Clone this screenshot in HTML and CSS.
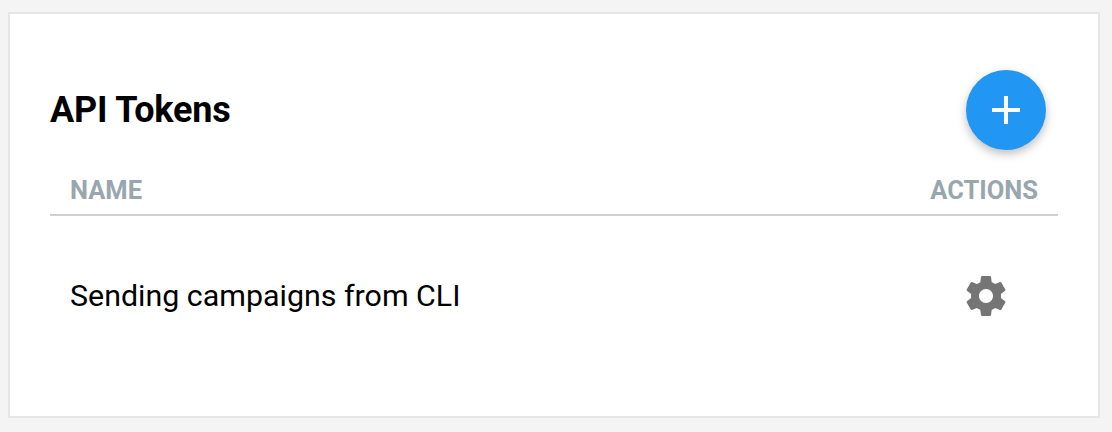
FILE: index.html
```
<!DOCTYPE html>
<html lang="en">
<head>
<meta charset="utf-8">
<title>API Tokens</title>
<link rel="stylesheet" href="styles.css">
</head>
<body>
<main class="card">
  <header class="card-header">
    <h1 class="title">API Tokens</h1>
    <button class="add-button" aria-label="Add token">
      <svg class="plus" viewBox="0 0 48 48"><path d="M38 26H26v12h-4V26H10v-4h12V10h4v12h12z"/></svg>
    </button>
  </header>
  <div class="row table-head"><span>NAME</span><span>ACTIONS</span></div>
  <div class="row token">
    <span class="token-name">Sending campaigns from CLI</span>
    <button class="settings" aria-label="Token settings">
      <svg class="gear" viewBox="0 0 24 24"><path d="M19.43 12.98c.04-.32.07-.64.07-.98s-.03-.66-.07-.98l2.11-1.65c.19-.15.24-.42.12-.64l-2-3.46c-.12-.22-.39-.3-.61-.22l-2.49 1c-.52-.4-1.08-.73-1.69-.98l-.38-2.65C14.46 2.18 14.25 2 14 2h-4c-.25 0-.46.18-.49.42l-.38 2.65c-.61.25-1.17.59-1.69.98l-2.49-1c-.23-.09-.49 0-.61.22l-2 3.46c-.13.22-.07.49.12.64l2.11 1.65c-.04.32-.07.65-.07.98s.03.66.07.98l-2.11 1.65c-.19.15-.24.42-.12.64l2 3.46c.12.22.39.3.61.22l2.49-1c.52.4 1.08.73 1.69.98l.38 2.65c.03.24.24.42.49.42h4c.25 0 .46-.18.49-.42l.38-2.65c.61-.25 1.17-.59 1.69-.98l2.49 1c.23.09.49 0 .61-.22l2-3.46c.12-.22.07-.49-.12-.64l-2.11-1.65zM12 15.5c-1.93 0-3.5-1.57-3.5-3.5s1.57-3.5 3.5-3.5 3.5 1.57 3.5 3.5-1.57 3.5-3.5 3.5z"/></svg>
    </button>
  </div>
</main>
</body>
</html>
```
FILE: styles.css
```
* { box-sizing: border-box; }
body {
  margin: 0;
  padding: 12px 12px 14px 8px;
  height: 432px;
  background: #f4f4f4;
  color: #000;
  font-family: Roboto, sans-serif;
}
.card {
  height: 406px;
  padding: 56px 40px 0;
  background: #fff;
  border: 2px solid #e6e6e6;
}
.card-header {
  display: flex;
  align-items: center;
  justify-content: space-between;
  height: 80px;
  padding-right: 12px;
}
.title { margin: 0; font-size: 36px; line-height: 48px; font-weight: 700; letter-spacing: -.2px; }
button { padding: 0; border: 0; background: none; }
.add-button {
  display: flex;
  align-items: center;
  justify-content: center;
  width: 80px;
  height: 80px;
  border-radius: 50%;
  background: #2196f3;
  box-shadow: 0 4px 10px rgba(0, 0, 0, .26);
}
.plus { width: 48px; height: 48px; fill: #fff; }
.row {
  display: flex;
  align-items: center;
  justify-content: space-between;
  padding: 0 20px;
}
.table-head {
  height: 66px;
  padding-top: 16px;
  border-bottom: 2px solid #d0d0d0;
  color: #98a6ad;
  font-size: 25.5px;
  font-weight: 700;
}
.token { height: 160px; padding-right: 48px; font-size: 30.4px; }
.token-name { padding-bottom: 2px; }
.settings { display: flex; }
.gear { width: 48px; height: 48px; fill: #757575; }
```
